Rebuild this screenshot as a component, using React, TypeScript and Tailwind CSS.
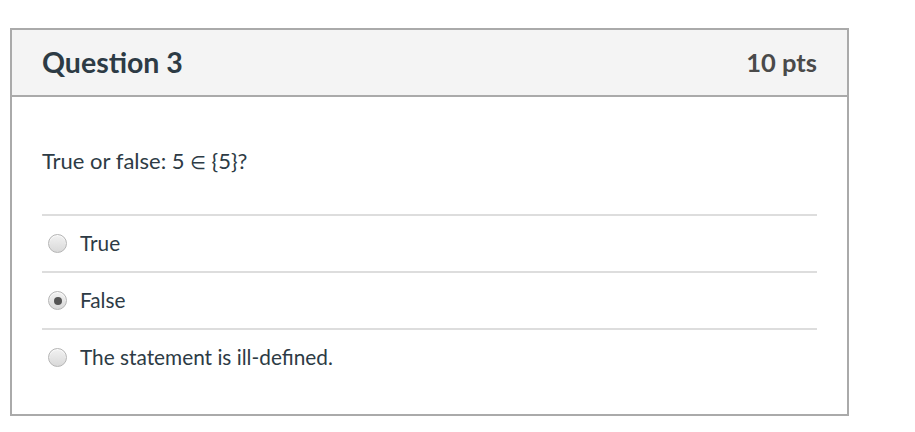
import React from "react";

function Radio({ checked }: { checked?: boolean }) {
  return (
    <span className="relative ml-[6px] mr-[13px] flex h-[19px] w-[19px] shrink-0 items-center justify-center rounded-full border border-[#b5b5b5] bg-gradient-to-b from-[#f2f2f2] to-[#d9d9d9] shadow-[inset_0_1px_1px_rgba(255,255,255,0.8)]">
      {checked && <span className="h-[8px] w-[8px] rounded-full bg-[#555]" />}
    </span>
  );
}

export default function App() {
  const options = [
    { label: "True", checked: false },
    { label: "False", checked: true },
    { label: "The statement is ill-defined.", checked: false },
  ];
  return (
    <div className="min-h-[432px] w-[915px] bg-white pl-[10px] pt-[28px] text-[#2d3b45]" style={{ fontFamily: "Lato, 'Noto Sans', sans-serif" }}>
      <div className="w-[839px] border-2 border-[#aaaaaa]">
        <div className="flex h-[67px] items-center justify-between border-b-2 border-[#aaaaaa] bg-[#f4f4f4] px-[30px]">
          <span className="text-[28.5px] font-bold leading-none">Question 3</span>
          <span className="text-[25.5px] font-bold leading-none text-[#4a4a4a]">10 pts</span>
        </div>
        <div className="px-[30px] pb-[29px] pt-[49px]">
          <p className="h-[30px] text-[22px] leading-[30px]">
            True or false: 5{" "}
            <span className="text-[18px]" style={{ fontFamily: "'DejaVu Sans', sans-serif" }}>∈</span>
            {" "}{"{5}"}?
          </p>
          <div className="mt-[38px]">
            {options.map((o) => (
              <div key={o.label} className="flex h-[57px] items-center border-t-2 border-[#dddddd]">
                <Radio checked={o.checked} />
                <span className="text-[20.8px] leading-none">{o.label}</span>
              </div>
            ))}
          </div>
        </div>
      </div>
    </div>
  );
}
